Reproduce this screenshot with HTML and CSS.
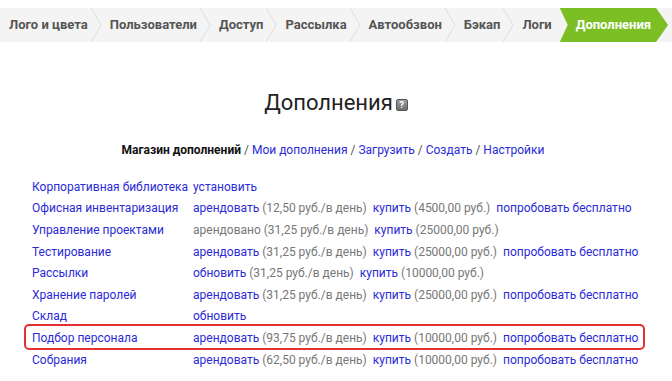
FILE: index.html
```html
<!DOCTYPE html>
<html lang="ru">
<head>
  <meta charset="UTF-8">
  <title>Дополнения</title>
  <link rel="stylesheet" href="styles.css">
</head>
<body>

  <!-- Steps bar -->
  <div class="steps">
    <span class="sep first"><svg width="11" height="34"><polyline points="0,0 10,17 0,34" /></svg></span>
    <a class="step" href="#">Лого и цвета</a>
    <span class="sep"><svg width="11" height="34"><polyline points="0,0 10,17 0,34" /></svg></span>
    <a class="step" href="#">Пользователи</a>
    <span class="sep"><svg width="11" height="34"><polyline points="0,0 10,17 0,34" /></svg></span>
    <a class="step" href="#">Доступ</a>
    <span class="sep"><svg width="11" height="34"><polyline points="0,0 10,17 0,34" /></svg></span>
    <a class="step" href="#">Рассылка</a>
    <span class="sep"><svg width="11" height="34"><polyline points="0,0 10,17 0,34" /></svg></span>
    <a class="step" href="#">Автообзвон</a>
    <span class="sep"><svg width="11" height="34"><polyline points="0,0 10,17 0,34" /></svg></span>
    <a class="step" href="#">Бэкап</a>
    <span class="sep"><svg width="11" height="34"><polyline points="0,0 10,17 0,34" /></svg></span>
    <a class="step" href="#">Логи</a>
    <a class="step active" href="#">Дополнения</a>
  </div>

  <h1 class="title">Дополнения<span class="help">?</span></h1>

  <div class="subnav">
    <b>Магазин дополнений</b> / <a href="#">Мои дополнения</a> / <a href="#">Загрузить</a> / <a href="#">Создать</a> / <a href="#">Настройки</a>
  </div>

  <table class="addons">
    <tr>
      <td><a href="#">Корпоративная библиотека</a></td>
      <td><a href="#">установить</a></td>
    </tr>
    <tr>
      <td><a href="#">Офисная инвентаризация</a></td>
      <td><a href="#">арендовать</a> (12,50 руб./в день) &nbsp;<a href="#">купить</a> (4500,00 руб.) &nbsp;<a href="#">попробовать бесплатно</a></td>
    </tr>
    <tr>
      <td><a href="#">Управление проектами</a></td>
      <td>арендовано (31,25 руб./в день) &nbsp;<a href="#">купить</a> (25000,00 руб.)</td>
    </tr>
    <tr>
      <td><a href="#">Тестирование</a></td>
      <td><a href="#">арендовать</a> (31,25 руб./в день) &nbsp;<a href="#">купить</a> (25000,00 руб.) &nbsp;<a href="#">попробовать бесплатно</a></td>
    </tr>
    <tr>
      <td><a href="#">Рассылки</a></td>
      <td><a href="#">обновить</a> (31,25 руб./в день) &nbsp;<a href="#">купить</a> (10000,00 руб.)</td>
    </tr>
    <tr>
      <td><a href="#">Хранение паролей</a></td>
      <td><a href="#">арендовать</a> (31,25 руб./в день) &nbsp;<a href="#">купить</a> (25000,00 руб.) &nbsp;<a href="#">попробовать бесплатно</a></td>
    </tr>
    <tr>
      <td><a href="#">Склад</a></td>
      <td><a href="#">обновить</a></td>
    </tr>
    <tr class="marked">
      <td><a href="#">Подбор персонала</a></td>
      <td><a href="#">арендовать</a> (93,75 руб./в день) &nbsp;<a href="#">купить</a> (10000,00 руб.) &nbsp;<a href="#">попробовать бесплатно</a></td>
    </tr>
    <tr>
      <td><a href="#">Собрания</a></td>
      <td><a href="#">арендовать</a> (62,50 руб./в день) &nbsp;<a href="#">купить</a> (10000,00 руб.) &nbsp;<a href="#">попробовать бесплатно</a></td>
    </tr>
  </table>

</body>
</html>
```

FILE: styles.css
```css
body {
  margin: 0;
  background: #fff;
  color: #222;
  font-family: Roboto, sans-serif;
  font-size: 12px;
  overflow: hidden;
}

a {
  color: #2a2ad8;
  text-decoration: none;
}

/* Steps bar */
.steps {
  margin-top: 8px;
  height: 34px;
  background: #f4f4f4;
  display: flex;
  align-items: center;
  white-space: nowrap;
  overflow: hidden;
}

.step {
  height: 34px;
  line-height: 34px;
  padding: 0 3px 0 8px;
  color: #555;
  font-weight: bold;
  font-size: 13px;
  flex: none;
}

.sep {
  flex: none;
  height: 34px;
}

.sep svg {
  display: block;
}

.sep polyline {
  fill: none;
  stroke: #dedede;
  stroke-width: 1;
}

.sep.first {
  margin-left: -10px;
}

.step.active {
  background: #7cbf25;
  color: #fff;
  margin-left: 5px;
  padding: 0 17px 0 16px;
  clip-path: polygon(0 0, calc(100% - 12px) 0, 100% 50%, calc(100% - 12px) 100%, 0 100%, 8px 50%);
}

/* Heading */
.title {
  margin: 47px 0 0;
  text-align: center;
  font-weight: normal;
  font-size: 22px;
  line-height: 28px;
  color: #222;
}

.help {
  display: inline-block;
  width: 10px;
  height: 10px;
  margin-left: 3px;
  border: 1px solid #555;
  border-radius: 2px;
  background: linear-gradient(#a0a0a0, #6e6e6e);
  color: #fff;
  font-size: 9px;
  line-height: 10px;
  text-align: center;
  font-weight: bold;
  vertical-align: 2px;
}

.subnav {
  margin-top: 26px;
  text-align: center;
  padding-right: 6px;
  color: #555;
}

.subnav b {
  color: #111;
}

/* Addon table */
.addons {
  margin: 19px 0 0 32px;
  border-collapse: collapse;
  color: #777;
}

.addons td {
  padding: 0;
  height: 21.6px;
  white-space: nowrap;
}

.addons td:first-child {
  width: 161px;
}

/* red annotation frame around one row */
.addons tr.marked td:first-child {
  position: relative;
}

.addons tr.marked td:first-child::before {
  content: "";
  position: absolute;
  left: -8px;
  top: -3px;
  width: 617px;
  height: 22px;
  border: 2px solid #e33030;
  border-radius: 5px;
}
```
